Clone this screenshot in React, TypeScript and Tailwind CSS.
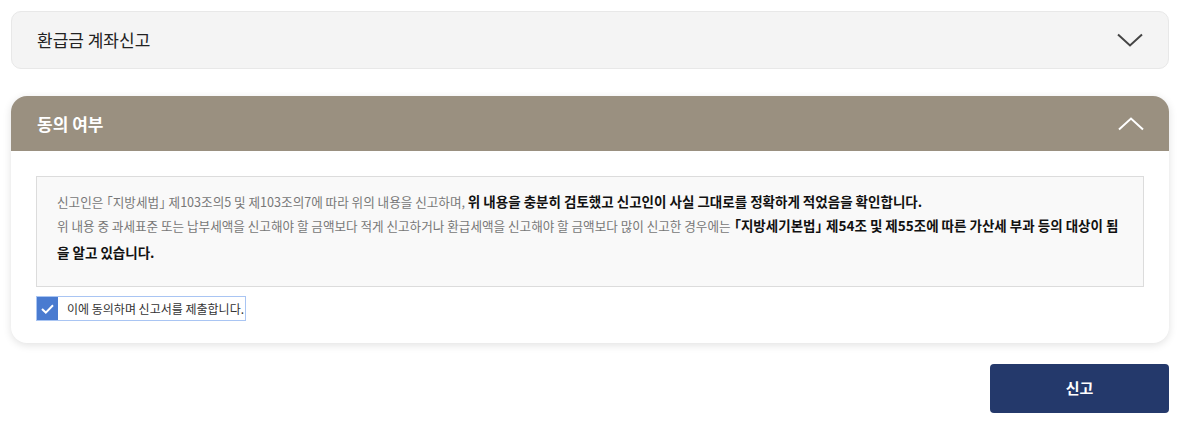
import React from "react";

const font = { fontFamily: '"Noto Sans CJK KR", "Noto Sans", sans-serif' };

function LB() {
  return <span className="-ml-[6px]">「</span>;
}
function RB() {
  return <span className="-mr-[6px]">」</span>;
}

export default function App() {
  return (
    <div className="w-[1183px] h-[434px] bg-white pl-[11px] pr-[14px] pt-[11px]" style={font}>
      <div className="h-[58px] rounded-[10px] bg-[#f4f4f4] border border-[#e8e8e8] flex items-center justify-between pl-[25px] pr-[25px]">
        <span className="text-[17px] text-[#222]">환급금 계좌신고</span>
        <svg width="26" height="14" viewBox="0 0 26 14" fill="none">
          <path d="M1 1.5 L13 12.5 L25 1.5" stroke="#444" strokeWidth="2" />
        </svg>
      </div>

      <div className="mt-[27px] rounded-[16px] bg-white shadow-[0_2px_8px_rgba(0,0,0,0.12)] overflow-hidden">
        <div className="h-[55px] bg-[#9a9080] flex items-center justify-between pl-[26px] pr-[25px]">
          <span className="text-[17px] font-bold text-white">동의 여부</span>
          <svg width="26" height="14" viewBox="0 0 26 14" fill="none">
            <path d="M1 12.5 L13 1.5 L25 12.5" stroke="#fff" strokeWidth="2" />
          </svg>
        </div>
        <div className="px-[25px] pt-[25px] pb-[22px]">
          <div className="h-[111px] bg-[#f9f9f9] border border-[#dcdcdc] pl-[20px] pr-[20px] pt-[12px] text-[12.6px] text-[#777]">
            <p className="leading-[24px]">
              신고인은 <LB />지방세법<RB /> 제103조의5 및 제103조의7에 따라 위의 내용을 신고하며,{" "}
              <b className="text-[13.5px] text-[#111] font-bold">위 내용을 충분히 검토했고 신고인이 사실 그대로를 정확하게 적었음을 확인합니다.</b>
            </p>
            <p className="leading-[27px] -mt-[2px]">
              위 내용 중 과세표준 또는 납부세액을 신고해야 할 금액보다 적게 신고하거나 환급세액을 신고해야 할 금액보다 많이 신고한 경우에는{" "}
              <b className="text-[13.5px] text-[#111] font-bold"><LB />지방세기본법<RB /> 제54조 및 제55조에 따른 가산세 부과 등의 대상이 됨을 알고 있습니다.</b>
            </p>
          </div>
          <label className="mt-[9px] inline-flex items-center h-[25px] border border-[#a9c5f3] pr-[1px]">
            <span className="w-[21px] h-[23px] bg-[#4a7bd0] flex items-center justify-center">
              <svg width="13" height="10" viewBox="0 0 13 10" fill="none">
                <path d="M1 5 L4.8 8.6 L12 1.2" stroke="#fff" strokeWidth="2" />
              </svg>
            </span>
            <span className="ml-[9px] text-[12px] text-[#333]">이에 동의하며 신고서를 제출합니다.</span>
          </label>
        </div>
      </div>

      <div className="flex justify-end mt-[21px]">
        <button className="w-[179px] h-[49px] bg-[#24396b] rounded-[4px] text-white font-bold text-[15px]">신고</button>
      </div>
    </div>
  );
}
